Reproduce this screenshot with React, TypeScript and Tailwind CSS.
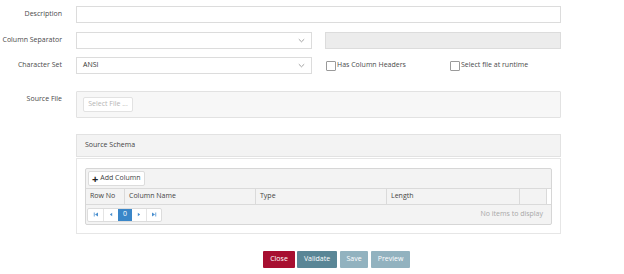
import React from "react"

function Chevron() {
  return (
    <svg width="7" height="5" viewBox="0 0 7 5" className="mr-[6px]">
      <path d="M0.8 1.2 L3.5 3.8 L6.2 1.2" fill="none" stroke="#8a8a8a" strokeWidth="0.8" />
    </svg>
  )
}

function PagerIcon({ kind }: { kind: "first" | "prev" | "next" | "last" }) {
  const c = "#4a8fcf"
  return (
    <svg width="6" height="5" viewBox="0 0 6 5">
      {kind === "first" && (
        <>
          <rect x="0.8" y="0.5" width="0.8" height="4" fill={c} />
          <path d="M5 0.5 L2 2.5 L5 4.5 Z" fill={c} />
        </>
      )}
      {kind === "prev" && <path d="M4.2 0.8 L1.8 2.5 L4.2 4.2 Z" fill={c} />}
      {kind === "next" && <path d="M1.8 0.8 L4.2 2.5 L1.8 4.2 Z" fill={c} />}
      {kind === "last" && (
        <>
          <path d="M1 0.5 L4 2.5 L1 4.5 Z" fill={c} />
          <rect x="4.4" y="0.5" width="0.8" height="4" fill={c} />
        </>
      )}
    </svg>
  )
}

export default function App() {
  return (
    <div className="w-[624px] h-[274px] bg-white font-['Open_Sans',sans-serif] text-[7px] text-[#4a4a4a] overflow-hidden">
      <div className="pt-[6px]">
        {/* Description */}
        <div className="flex items-center h-[17px]">
          <label className="w-[62px] text-right">Description</label>
          <div className="ml-[14px] w-[485px] h-[17px] border border-[#dcdcdc] bg-white" />
        </div>

        {/* Column Separator */}
        <div className="flex items-center h-[17px] mt-[9px]">
          <label className="w-[62px] text-right whitespace-nowrap">Column Separator</label>
          <div className="ml-[14px] w-[236px] h-[17px] border border-[#dcdcdc] flex items-center justify-end">
            <Chevron />
          </div>
          <div className="ml-[13px] w-[236px] h-[17px] border border-[#dcdcdc] bg-[#ececec]" />
        </div>

        {/* Character Set */}
        <div className="flex items-center h-[17px] mt-[8px]">
          <label className="w-[62px] text-right">Character Set</label>
          <div className="ml-[14px] w-[236px] h-[17px] border border-[#dcdcdc] flex items-center justify-between pl-[6px]">
            <span className="text-[#333]">ANSI</span>
            <Chevron />
          </div>
          <div className="ml-[14px] flex items-center w-[124px]">
            <span className="w-[10px] h-[10px] border border-[#9a9a9a] rounded-[1px] bg-white" />
            <span className="ml-[1px]">Has Column Headers</span>
          </div>
          <div className="flex items-center">
            <span className="w-[10px] h-[10px] border border-[#9a9a9a] rounded-[1px] bg-white" />
            <span className="ml-[1px]">Select file at runtime</span>
          </div>
        </div>

        {/* Source File */}
        <div className="flex items-start mt-[17px]">
          <label className="w-[62px] text-right pt-[3px]">Source File</label>
          <div className="ml-[14px] w-[485px] h-[27px] border border-[#e2e2e2] bg-[#f7f7f7] rounded-[1px] pl-[6px] pt-[5px]">
            <div className="w-[50px] h-[15px] border border-[#e2e2e2] bg-white rounded-[2px] flex items-center justify-center text-[#b5b5b5]">
              Select File ...
            </div>
          </div>
        </div>

        {/* Source Schema */}
        <div className="ml-[76px] w-[485px] mt-[16px]">
          <div className="h-[23px] border border-[#e2e2e2] bg-[#f3f3f3] flex items-center pl-[8px] text-[#444]">
            Source Schema
          </div>
          <div className="mt-[1px] h-[76px] border border-[#e6e6e6] px-[8px] pt-[9px]">
            <div className="h-[57px] border border-[#d6d6d6] rounded-[2px] bg-[#f3f3f3] flex flex-col">
              <div className="h-[19px] flex items-center pl-[2px]">
                <div className="h-[15px] px-[3px] border border-[#dcdcdc] rounded-[2px] bg-white flex items-center text-[#444]">
                  <span className="text-[11px] font-bold leading-none mr-[2px] text-[#222]">+</span>
                  <span>Add Column</span>
                </div>
              </div>
              <div className="h-[17px] flex border-y border-[#dadada] text-[#444]">
                <div className="w-[38px] pl-[4px] flex items-center">Row No</div>
                <div className="w-[131px] pl-[4px] flex items-center border-l border-[#dadada]">Column Name</div>
                <div className="w-[131px] pl-[4px] flex items-center border-l border-[#dadada]">Type</div>
                <div className="w-[133px] pl-[4px] flex items-center border-l border-[#dadada]">Length</div>
                <div className="w-[27px] border-l border-[#dadada]" />
                <div className="flex-1 border-l border-[#dadada] bg-white" />
              </div>
              <div className="flex-1 flex items-center justify-between pl-[1px] pr-[8px]">
                <div className="flex h-[14px] border border-[#dcdcdc] rounded-[2px] bg-white overflow-hidden">
                  <div className="w-[15px] flex items-center justify-center"><PagerIcon kind="first" /></div>
                  <div className="w-[15px] flex items-center justify-center border-l border-[#e4e4e4]"><PagerIcon kind="prev" /></div>
                  <div className="w-[14px] flex items-center justify-center bg-[#3a86c8] text-white">0</div>
                  <div className="w-[15px] flex items-center justify-center border-r border-[#e4e4e4]"><PagerIcon kind="next" /></div>
                  <div className="w-[14px] flex items-center justify-center"><PagerIcon kind="last" /></div>
                </div>
                <span className="text-[#a8a8a8]">No items to display</span>
              </div>
            </div>
          </div>
        </div>

        {/* Buttons */}
        <div className="flex ml-[263px] mt-[17px] h-[17px] text-white">
          <button className="w-[32px] h-[17px] bg-[#a70f30] rounded-[1px]">Close</button>
          <button className="ml-[2px] w-[40px] h-[17px] bg-[#5a8696] rounded-[1px]">Validate</button>
          <button className="ml-[3px] w-[28px] h-[17px] bg-[#92b2bf] rounded-[1px]">Save</button>
          <button className="ml-[3px] w-[39px] h-[17px] bg-[#92b2bf] rounded-[1px]">Preview</button>
        </div>
      </div>
    </div>
  )
}
